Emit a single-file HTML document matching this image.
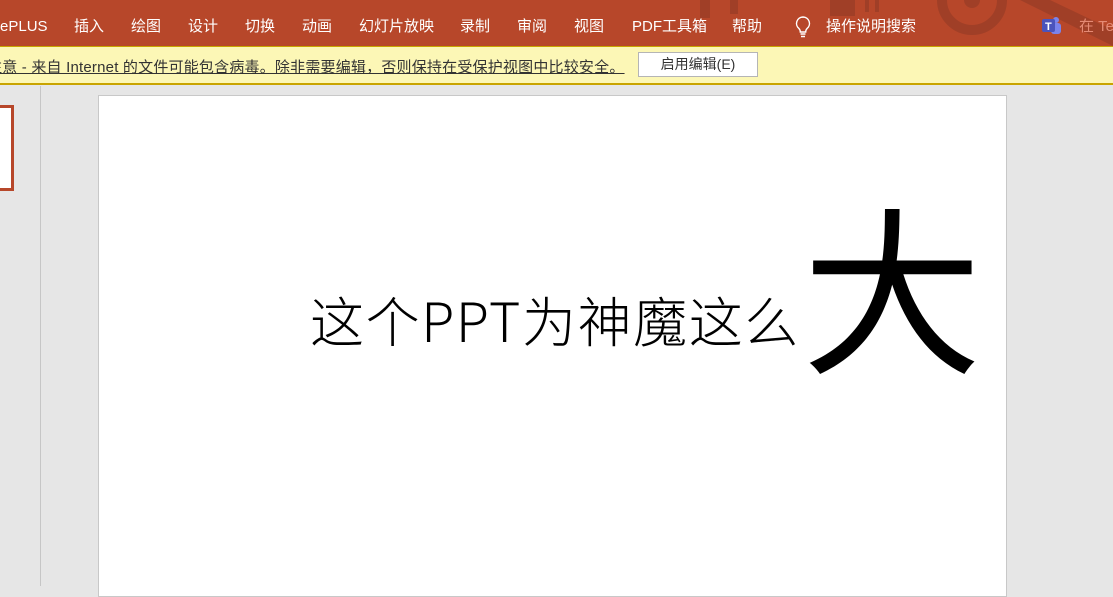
<!DOCTYPE html>
<html><head><meta charset="utf-8"><style>
body{margin:0;width:1113px;height:586px;overflow:hidden;background:#e6e6e6;font-family:"Liberation Sans","Noto Sans CJK SC",sans-serif;position:relative}
.top{position:absolute;left:0;top:0;width:1113px;height:46px;background:#b7472a;color:#fff;font-size:15px}
.top span{position:absolute;top:16px;height:22px;line-height:22px;white-space:nowrap}
.bar{position:absolute;left:0;top:46px;width:1113px;height:36px;background:#fcf7b6;border-top:1px solid #c9a400;border-bottom:2px solid #c9a400}
.msg{position:absolute;left:-13px;top:9px;font-size:15px;color:#333;text-decoration:underline;white-space:nowrap;letter-spacing:0.2px}
.btn{position:absolute;left:638px;top:5px;width:118px;height:23px;background:#fff;border:1px solid #b5b5b5;font-size:14px;color:#333;text-align:center;line-height:23px}
.slide{position:absolute;left:98px;top:95px;width:907px;height:500px;background:#fff;border:1px solid #c8c8c8}
.t1{position:absolute;left:310px;top:284px;font-family:"Noto Sans CJK SC",sans-serif;font-weight:300;font-size:54px;line-height:70px;color:#000;white-space:nowrap;letter-spacing:1.6px}
.t2{position:absolute;left:802px;top:172px;font-family:"Noto Sans CJK SC",sans-serif;font-weight:400;font-size:180px;line-height:220px;color:#000}
</style></head><body>
<div class="top">
<svg style="position:absolute;left:690px;top:0" width="423" height="46"><g fill="#a03f27"><rect x="10" y="0" width="10" height="18"/><rect x="40" y="0" width="8" height="14"/><rect x="140" y="0" width="25" height="16"/><rect x="175" y="0" width="4" height="12"/><rect x="185" y="0" width="4" height="12"/><circle cx="282" cy="0" r="30" fill="none" stroke="#a03f27" stroke-width="10"/><circle cx="282" cy="0" r="8"/><path d="M330 0 L423 46 L423 30 L360 0Z"/></g></svg>
<span style="left:0">ePLUS</span><span style="left:74px">插入</span><span style="left:131px">绘图</span><span style="left:188px">设计</span><span style="left:245px">切换</span><span style="left:302px">动画</span><span style="left:359px">幻灯片放映</span><span style="left:460px">录制</span><span style="left:517px">审阅</span><span style="left:574px">视图</span><span style="left:632px">PDF工具箱</span><span style="left:732px">帮助</span>
<svg style="position:absolute;left:794px;top:16px" width="18" height="22" viewBox="0 0 18 22"><path d="M9 1a6.5 6.5 0 0 0-4 11.6c1 1 1.3 2 1.3 3.4h5.4c0-1.4.3-2.4 1.3-3.4A6.5 6.5 0 0 0 9 1z" fill="none" stroke="#fff" stroke-width="1.4"/><path d="M6.5 18h5M7 20.5h4" stroke="#fff" stroke-width="1.4"/></svg>
<span style="left:826px">操作说明搜索</span>
<svg style="position:absolute;left:1041px;top:16px" width="20" height="18"><circle cx="15" cy="4" r="3" fill="#7b83eb"/><rect x="10" y="7" width="10" height="11" rx="3" fill="#7b83eb"/><rect x="1" y="3" width="13" height="13" rx="2" fill="#4b53bc"/><text x="4" y="14" fill="#fff" font-size="11" font-family="Liberation Sans" font-weight="bold">T</text></svg>
<span style="left:1079px;color:#e58a75">在 Te</span>
</div>
<div class="bar"><div class="msg">注意 - 来自 Internet 的文件可能包含病毒。除非需要编辑，否则保持在受保护视图中比较安全。</div><div class="btn">启用编辑(E)</div></div>
<div style="position:absolute;left:40px;top:86px;width:1px;height:500px;background:#c6c6c6"></div>
<div style="position:absolute;left:-4px;top:105px;width:12px;height:80px;background:#fff;border:3px solid #b7472a"></div>
<div class="slide"></div>
<div class="t1">这个PPT为神魔这么</div>
<div class="t2">大</div>
</body></html>
